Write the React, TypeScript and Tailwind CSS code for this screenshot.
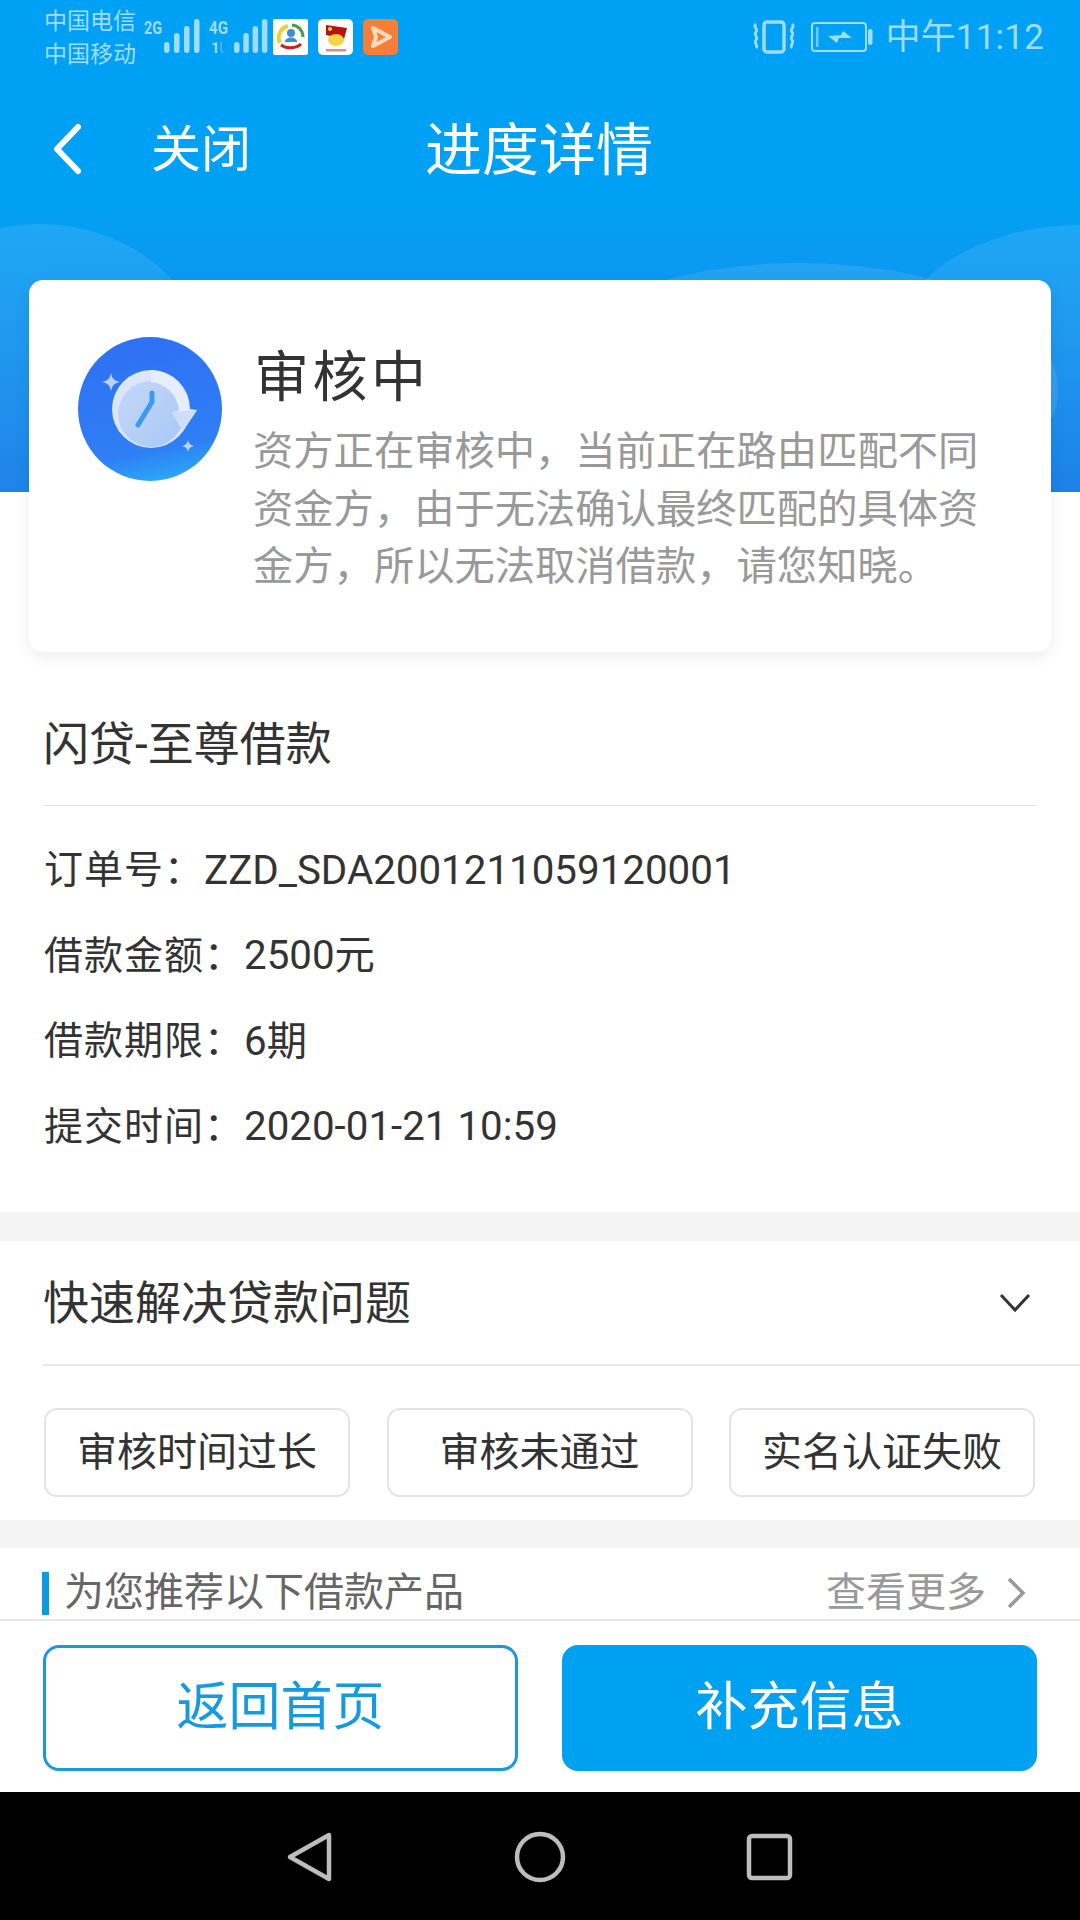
const Signal = ({ x, p }: { x: number; p: number }) => (
  <g fill="#9fdcfb">
    <rect x={x} y="42" width="5.5" height="11" rx="2.7" />
    <rect x={x + p} y="33" width="5.5" height="20" rx="2.7" />
    <rect x={x + 2 * p} y="26" width="5.5" height="27" rx="2.7" />
    <rect x={x + 3 * p} y="19" width="5.5" height="34" rx="2.7" />
  </g>
);

function StatusIcons() {
  return (
    <svg width="260" height="75" viewBox="0 0 260 75" className="shrink-0">
      <text x="0" y="34" fontSize="19" fontWeight="700" fill="#9fdcfb" fontFamily="Roboto, sans-serif" textLength="18" lengthAdjust="spacingAndGlyphs">2G</text>
      <Signal x={20} p={10} />
      <text x="65" y="34" fontSize="19" fontWeight="700" fill="#9fdcfb" fontFamily="Roboto, sans-serif" textLength="19" lengthAdjust="spacingAndGlyphs">4G</text>
      <text x="67" y="53" fontSize="15" fontWeight="700" fill="#9fdcfb" fontFamily="Roboto, sans-serif">1</text>
      <path d="M77 42v8l2 3" stroke="#9fdcfb" strokeWidth="1.500" fill="none" opacity="0.5" />
      <Signal x={90} p={9.3} />
      <g transform="translate(129,19)">
        <rect width="35" height="36" fill="#fff" rx="2" />
        <path d="M7 24a12 12 0 0 1 8-17" stroke="#e8d23a" strokeWidth="4" fill="none" />
        <path d="M19 6a12 12 0 0 1 11 12" stroke="#4a9e4a" strokeWidth="3" fill="none" />
        <path d="M8 26a13 9 0 0 0 20-1" stroke="#c8202a" strokeWidth="3" fill="none" />
        <circle cx="18" cy="14" r="4" fill="#3b8fd8" />
        <path d="M12 23c0-6 12-6 12 0z" fill="#3b8fd8" />
      </g>
      <g transform="translate(174,19)">
        <rect width="35" height="36" fill="#fff" rx="5" />
        <path d="M8 6l21 3-3 11-18-4z" fill="#b8120e" />
        <circle cx="12" cy="10" r="2" fill="#f2d640" />
        <ellipse cx="18" cy="21" rx="8" ry="6" fill="#f2d640" />
        <rect x="8" y="30" width="20" height="2.500" fill="#a33" opacity="0.55" />
      </g>
      <g transform="translate(219,19)">
        <rect width="35" height="36" fill="#f57f36" rx="5" />
        <path d="M10 9l17 9-17 9 3-9z" fill="none" stroke="#ffd9bb" strokeWidth="4" strokeLinejoin="round" />
      </g>
    </svg>
  );
}

function RightStatus() {
  return (
    <div className="flex items-center">
      <svg width="130" height="50" viewBox="0 0 130 50" className="shrink-0 mr-[5px]">
        <g fill="none" stroke="#9fdcfb">
          <rect x="14" y="9" width="20" height="30" rx="3" strokeWidth="3.5" />
          <path d="M6 11c-4 3 3 5 0 8s3 5 0 8 3 5 0 8" strokeWidth="2.8" />
          <path d="M42 11c4 3-3 5 0 8s-3 5 0 8-3 5 0 8" strokeWidth="2.8" />
          <rect x="62" y="10" width="54" height="28" rx="3" strokeWidth="2" />
        </g>
        <rect x="66" y="14" width="2.500" height="20" fill="#9fdcfb" opacity="0.7" />
        <path d="M78 23l13-1 2-4 9 7-13 0-2 5z" fill="#9fdcfb" />
        <rect x="118" y="16" width="4.500" height="16" rx="2.200" fill="#9fdcfb" />
      </svg>
      <span className="text-[35px] leading-none text-[#9fdcfb] tracking-[0.2px]">中午11:12</span>
    </div>
  );
}

function ClockBadge() {
  return (
    <svg width="144" height="144" viewBox="0 0 144 144" className="shrink-0">
      <defs>
        <linearGradient id="b" x1="0.4" y1="0" x2="0.6" y2="1">
          <stop offset="0" stopColor="#2f70f4" />
          <stop offset="0.78" stopColor="#2f7ff4" />
          <stop offset="1" stopColor="#2aa8f9" />
        </linearGradient>
        <linearGradient id="f" x1="0" y1="0" x2="1" y2="1">
          <stop offset="0" stopColor="#c5d8f8" />
          <stop offset="1" stopColor="#a6c8f6" />
        </linearGradient>
      </defs>
      <circle cx="72" cy="72" r="72" fill="url(#b)" />
      <circle cx="73" cy="72" r="39" fill="#dbe6fa" />
      <circle cx="73" cy="77" r="33" fill="url(#f)" />
      <path d="M73 33a39 39 0 0 1 38 39l8 1-14 21-11-19 7-1a31 31 0 0 0-28-29z" fill="#e6eefc" />
      <path d="M94 75l25-2-14 21z" fill="#cfdffa" />
      <path d="M74 56v9L60 88" fill="none" stroke="#3d9bef" strokeWidth="5" strokeLinecap="round" strokeLinejoin="round" />
      <path d="M33 36q1 8 9 9-8 1-9 9-1-8-9-9 8-1 9-9z" fill="#bcd2f8" />
      <path d="M110 103q.7 5 6 6-5.300 1-6 6-.7-5-6-6 5.300-1 6-6z" fill="#bcd2f8" />
    </svg>
  );
}

const Row = ({ label, value }: { label: string; value: string }) => (
  <div className="h-[85.500px] flex items-center leading-none text-[#333] pl-[44px]">
    <span className="text-[39px] tracking-[1px]">{label}</span>
    <span className="text-[40.300px]">{value}</span>
  </div>
);

const Tag = ({ children }: { children: string }) => (
  <div className="w-[306px] h-[89px] rounded-[13px] border-2 border-[#e4e4e4] flex items-center justify-center text-[40px] leading-none text-[#333]">
    {children}
  </div>
);

export default function App() {
  return (
    <div className="w-[1080px] h-[1920px] overflow-hidden bg-white flex flex-col font-['Roboto','Noto_Sans_CJK_SC',sans-serif]">
      <div className="h-[492px] shrink-0 relative overflow-hidden bg-gradient-to-b from-[#00a1f4] from-40% to-[#1c82e8]">
        <div className="absolute left-[-130px] top-[224px] w-[340px] h-[300px] rounded-[50%] bg-gradient-to-b from-white/10 to-transparent" />
        <div className="absolute left-[560px] top-[263px] w-[480px] h-[200px] rounded-[50%] bg-white/10" />
        <div className="absolute left-[890px] top-[225px] w-[380px] h-[260px] rounded-[50%] bg-gradient-to-b from-white/10 to-white/0" />
        <div className="absolute left-[1000px] top-[345px] w-[58px] h-[90px] rounded-[50%] bg-white/10" />
        <div className="relative h-[75px] flex items-center justify-between pl-[44px] pr-[36px]">
          <div className="flex items-center">
            <div className="w-[100px] text-[23px] leading-[33px] text-[#9fdcfb]">
              <div>中国电信</div>
              <div>中国移动</div>
            </div>
            <StatusIcons />
          </div>
          <RightStatus />
        </div>
        <div className="relative h-[150px] flex items-center text-white">
          <svg width="30" height="52" viewBox="0 0 30 52" className="ml-[52px] mt-[-3px] shrink-0">
            <path d="M26 4L5 26l21 22" fill="none" stroke="#fff" strokeWidth="6" strokeLinecap="round" strokeLinejoin="round" />
          </svg>
          <span className="ml-[69px] text-[50px] leading-none">关闭</span>
          <span className="ml-[174px] text-[57px] leading-none">进度详情</span>
        </div>
      </div>

      <div className="relative mt-[-212px] mx-[29px] h-[372px] shrink-0 bg-white rounded-[14px] shadow-[0_4px_16px_rgba(0,0,0,0.08)] flex pl-[49px] pt-[57px]">
        <ClockBadge />
        <div className="ml-[31px] mt-[4px]">
          <div className="text-[55px] leading-[72px] text-[#333] ml-[1px] tracking-[3.500px]">审核中</div>
          <div className="w-[745px] text-[40.300px] leading-[57.500px] text-[#999] mt-[10px]">
            <div>资方正在审核中，当前正在路由匹配不同</div>
            <div>资金方，由于无法确认最终匹配的具体资</div>
            <div>金方，所以无法取消借款，请您知晓。</div>
          </div>
        </div>
      </div>

      <div className="h-[154px] shrink-0 mx-[43px] pt-[30px] border-b border-[#dedede] flex items-center text-[46px] leading-none text-[#333]">
        闪贷-至尊借款
      </div>

      <div className="pt-[22px] h-[406px] shrink-0">
        <Row label="订单号：" value="ZZD_SDA2001211059120001" />
        <Row label="借款金额：" value="2500元" />
        <Row label="借款期限：" value="6期" />
        <Row label="提交时间：" value="2020-01-21 10:59" />
      </div>

      <div className="h-[29px] shrink-0 bg-[#f4f4f4]" />

      <div className="h-[125px] shrink-0 ml-[43px] border-b-2 border-[#e8e8e8] flex items-center justify-between pr-[49px]">
        <span className="text-[46px] leading-none text-[#333]">快速解决贷款问题</span>
        <svg width="32" height="20" viewBox="0 0 32 20">
          <path d="M2 2l14 15L30 2" fill="none" stroke="#333" strokeWidth="3" />
        </svg>
      </div>

      <div className="h-[154px] shrink-0 pl-[44px] pr-[45px] flex items-start justify-between pt-[42px]">
        <Tag>审核时间过长</Tag>
        <Tag>审核未通过</Tag>
        <Tag>实名认证失败</Tag>
      </div>

      <div className="h-[28px] shrink-0 bg-[#f4f4f4]" />

      <div className="h-[73px] shrink-0 border-b-2 border-[#e8e8e8] flex items-center justify-between pl-[42px] pr-[54px]">
        <div className="flex items-center mt-[19px]">
          <div className="w-[7px] h-[43px] bg-[#0d9ae0]" />
          <span className="ml-[15px] text-[40px] leading-none text-[#666]">为您推荐以下借款产品</span>
        </div>
        <div className="flex items-center mt-[19px]">
          <span className="text-[40px] leading-none text-[#999]">查看更多</span>
          <svg width="20" height="34" viewBox="0 0 20 34" className="ml-[20px]">
            <path d="M3 3l14 14L3 31" fill="none" stroke="#999" strokeWidth="3.500" />
          </svg>
        </div>
      </div>

      <div className="h-[171px] shrink-0 bg-white px-[43px] pt-[24px] flex justify-between items-start">
        <div className="w-[475px] h-[126px] rounded-[16px] border-[3px] border-[#1a98d8] flex items-center justify-center text-[52px] leading-none text-[#159ae0]">
          返回首页
        </div>
        <div className="w-[475px] h-[126px] rounded-[16px] bg-[#00a1f1] flex items-center justify-center text-[52px] leading-none text-white">
          补充信息
        </div>
      </div>

      <div className="flex-1 bg-black flex items-center justify-center">
        <svg width="600" height="70" viewBox="0 0 600 70">
          <path d="M89 14v44L50 36z" fill="none" stroke="#bdbdbd" strokeWidth="4.500" strokeLinejoin="round" />
          <circle cx="300" cy="36" r="23" fill="none" stroke="#bdbdbd" strokeWidth="4.500" />
          <rect x="509" y="15" width="41" height="42" rx="3" fill="none" stroke="#bdbdbd" strokeWidth="4.500" />
        </svg>
      </div>
    </div>
  );
}
